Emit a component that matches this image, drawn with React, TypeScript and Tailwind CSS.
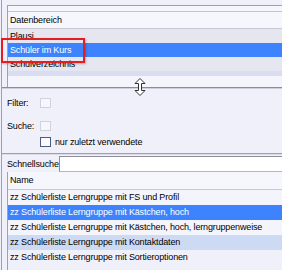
export default function App() {
  const rows = [
    { label: "zz Schülerliste Lerngruppe mit FS und Profil", tone: "bg-[#f4f4fc] text-black" },
    { label: "zz Schülerliste Lerngruppe mit Kästchen, hoch", tone: "bg-[#3d83fd] text-white" },
    { label: "zz Schülerliste Lerngruppe mit Kästchen, hoch, lerngruppenweise", tone: "bg-[#f4f4fc] text-black" },
    { label: "zz Schülerliste Lerngruppe mit Kontaktdaten", tone: "bg-[#cddaf3] text-black" },
    { label: "zz Schülerliste Lerngruppe mit Sortieroptionen", tone: "bg-[#f0f0fa] text-black" },
  ];

  return (
    <div className="relative flex h-[270px] w-[282px] overflow-hidden bg-[#f0f0fa] font-['Liberation_Sans',Arial,sans-serif] text-[9px] leading-none tracking-[-0.15px] text-black">
      <div className="ml-px w-px bg-[#a0a0a8]" />
      <div className="flex min-w-0 flex-1 flex-col">
        {/* upper list: Datenbereich */}
        <div className="mt-[5px] ml-[5px] flex h-[82px] flex-col border-t border-l border-[#a0a0a8]">
          <div className="h-[6px] border-b border-[#c4c4d0] bg-[#f6f6fd]" />
          <div className="flex h-[17px] items-center border-b border-[#c8c8d4] bg-[#f6f6fd] pl-[2px]">
            Datenbereich
          </div>
          <div className="flex h-[14px] items-center bg-[#e6e6f0] pl-[2px]">Plausi</div>
          <div className="flex h-[14px] items-center bg-[#3d83fd] pl-[2px] text-white">Schüler im Kurs</div>
          <div className="flex h-[14px] items-center bg-[#e6e6f0] pl-[2px]">Schulverzeichnis</div>
          <div className="h-[5px] bg-[#d9ddf1]" />
          <div className="flex-1 bg-[#f4f4fc]" />
        </div>

        {/* splitter */}
        <div className="h-px bg-[#8c8c94]" />
        <div className="h-px bg-[#d0d0dc]" />

        {/* filter area */}
        <div className="flex h-[64px] flex-col pl-[5px]">
          <div className="mt-[9px] flex items-center">
            <span className="w-[33px]">Filter:</span>
            <span className="h-[10px] w-[11px] border border-[#d2d2dc] bg-[#f6f6fd]" />
          </div>
          <div className="mt-[13px] flex items-center">
            <span className="w-[33px]">Suche:</span>
            <span className="h-[10px] w-[11px] border border-[#d2d2dc] bg-[#f6f6fd]" />
          </div>
          <div className="mt-[6px] flex items-center pl-[33px]">
            <span className="h-[10px] w-[11px] border border-[#4c5c7c] bg-[#fbfbff]" />
            <span className="ml-[4px]">nur zuletzt verwendete</span>
          </div>
        </div>
        <div className="h-px bg-[#a0a0a8]" />
        <div className="h-px bg-[#dcdce6]" />

        {/* Schnellsuche */}
        <div className="mt-px flex h-[16px] items-stretch pl-[5px]">
          <span className="flex w-[52px] items-center">Schnellsuche</span>
          <div className="flex-1 border-t border-l border-b border-[#8c8c9c] border-b-[#a8b8d8] bg-white" />
        </div>

        {/* lower list */}
        <div className="ml-[5px] flex flex-1 flex-col border-l border-[#a0a0a8]">
          <div className="flex h-[18px] items-center border-b border-[#c8c8d4] bg-[#f6f6fd] pl-[2px]">Name</div>
          {rows.map((r) => (
            <div key={r.label} className={`flex h-[15px] items-center whitespace-nowrap pl-[2px] ${r.tone}`}>
              {r.label}
            </div>
          ))}
          <div className="flex-1 bg-[#f0f0fa]" />
        </div>
      </div>

      {/* red highlight box */}
      <div className="pointer-events-none absolute left-[1px] top-[38px] h-[25px] w-[84px] border-2 border-[#e41e1e] shadow-[1px_1px_2px_rgba(0,0,0,0.25)]" />

      {/* resize cursor */}
      <svg className="absolute left-[134px] top-[78px]" width="12" height="18" viewBox="0 0 12 18">
        <path
          d="M6 0.5 L11 5.5 L7.5 5.5 L7.5 12.5 L11 12.5 L6 17.5 L1 12.5 L4.5 12.5 L4.5 5.5 L1 5.5 Z"
          fill="white"
          stroke="#333"
          strokeWidth="1"
          strokeLinejoin="round"
        />
      </svg>
    </div>
  );
}
